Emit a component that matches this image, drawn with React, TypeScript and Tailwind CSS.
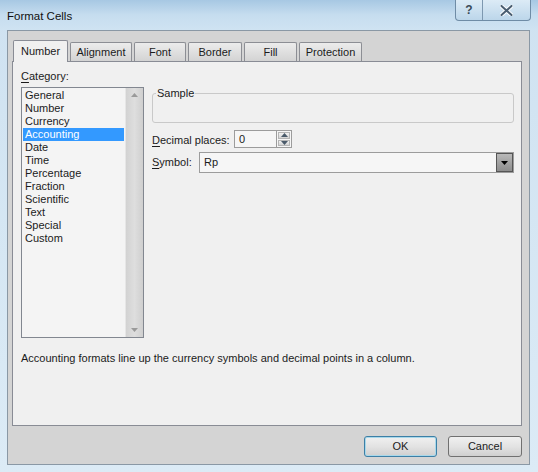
import React from 'react';

const categories = [
  'General',
  'Number',
  'Currency',
  'Accounting',
  'Date',
  'Time',
  'Percentage',
  'Fraction',
  'Scientific',
  'Text',
  'Special',
  'Custom',
];

const tabs = [
  { label: 'Number', w: 'w-[55px]' },
  { label: 'Alignment', w: 'w-[62px]' },
  { label: 'Font', w: 'w-[52px]' },
  { label: 'Border', w: 'w-[54px]' },
  { label: 'Fill', w: 'w-[53px]' },
  { label: 'Protection', w: 'w-[63px]' },
];

function Tri({ down = false, className = '' }: { down?: boolean; className?: string }) {
  return (
    <svg width="7" height="4" viewBox="0 0 7 4" className={className}>
      {down ? <path d="M0 0h7L3.5 4z" fill="currentColor" /> : <path d="M0 4h7L3.5 0z" fill="currentColor" />}
    </svg>
  );
}

export default function App() {
  return (
    <div
      className="w-[538px] h-[472px] flex flex-col overflow-hidden bg-gradient-to-b from-[#cfe2f1] to-[#dcebf6] text-[#1b1b1b] text-[11px] leading-[13px]"
      style={{ fontFamily: '"Liberation Sans", Arial, sans-serif' }}
    >
      {/* Title bar */}
      <div className="h-[30px] shrink-0 flex items-start bg-gradient-to-b from-[#a7c8e3] via-[#c6ddef] to-[#cfe3f2]">
        <div className="pl-[7px] pt-[10px] text-[11.5px] leading-[13px] text-[#101010]">Format Cells</div>
        <div className="ml-auto mr-[7px] flex h-[21px] border border-t-0 border-[#6f8ca6] rounded-b-[4px] overflow-hidden bg-gradient-to-b from-[#dcebf6] to-[#bcd6ea]">
          <div className="w-[27px] flex items-center justify-center border-r border-[#7d98b0] text-[12px] font-bold text-[#3a4a58]">?</div>
          <div className="w-[47px] flex items-center justify-center text-[#3a4a58]">
            <svg width="13" height="11" viewBox="0 0 13 11">
              <path d="M1.5 1l10 9M11.5 1l-10 9" stroke="#fafcfe" strokeWidth="4" strokeLinecap="round" />
              <path d="M1.5 1l10 9M11.5 1l-10 9" stroke="#4b5f72" strokeWidth="2" strokeLinecap="round" />
            </svg>
          </div>
        </div>
      </div>

      {/* Dialog body */}
      <div className="ml-[7px] w-[523px] h-[435px] shrink-0 flex flex-col bg-[#d4d4d4] border border-[#8a98a5] pt-[9px]">
        {/* Tabs */}
        <div className="flex items-end h-[21px] ml-[5px] gap-[2px] relative z-10">
          {tabs.map((t, i) =>
            i === 0 ? (
              <div
                key={t.label}
                className={`${t.w} h-[22px] -mb-px flex items-center justify-center bg-[#f0f0f0] border border-b-0 border-[#898c95] rounded-t-[2px]`}
              >
                {t.label}
              </div>
            ) : (
              <div
                key={t.label}
                className={`${t.w} h-[19px] flex items-center justify-center bg-gradient-to-b from-[#ececec] to-[#d3d3d3] border border-b-0 border-[#8c8e94] rounded-t-[2px]`}
              >
                {t.label}
              </div>
            ),
          )}
        </div>

        {/* Panel */}
        <div className="ml-[4px] w-[510px] h-[365px] shrink-0 bg-[#f0f0f0] border border-[#898c95] pt-[8px] pl-[8px]">
          <div className="flex">
            <div className="flex flex-col">
              <div className="h-[13px]">
                <span className="underline underline-offset-2">C</span>ategory:
              </div>
              <div className="mt-[4px] w-[123px] h-[251px] flex border border-[#828790] bg-[#f4f4f4]">
                <div className="flex-1 px-[1px] pt-[1px]">
                  {categories.map((c) => (
                    <div
                      key={c}
                      className={`h-[13px] pl-[2px] ${c === 'Accounting' ? 'bg-[#3399ff] text-white' : ''}`}
                    >
                      {c}
                    </div>
                  ))}
                </div>
                <div className="w-[18px] flex flex-col items-center justify-between bg-gradient-to-r from-[#d2d2d2] via-[#dedede] to-[#cfcfcf] border-l border-[#e6e6e6] py-[5px] text-[#9a9a9a]">
                  <Tri />
                  <Tri down />
                </div>
              </div>
            </div>

            <div className="ml-[8px] mt-[17px] w-[362px] flex flex-col">
              <fieldset className="h-[36px] border border-[#c9c9c9] rounded-[3px]">
                <legend className="ml-[3px] px-[1px] leading-[13px]">Sample</legend>
              </fieldset>

              <div className="mt-[7px] h-[18px] flex items-center">
                <div className="w-[82px] pt-[2px]">
                  <span className="underline underline-offset-2">D</span>ecimal places:
                </div>
                <div className="w-[43px] h-full flex items-center pl-[4px] bg-[#f6f6f6] border border-[#9c9c9c]">0</div>
                <div className="w-[15px] h-full flex flex-col border border-l-0 border-[#9c9c9c] bg-[#f6f6f6] p-[1px] gap-[1px]">
                  <div className="flex-1 flex items-center justify-center bg-gradient-to-b from-[#f2f2f2] to-[#d4d4d4] border border-[#b5b5b5] text-[#4a5a6a]">
                    <Tri />
                  </div>
                  <div className="flex-1 flex items-center justify-center bg-gradient-to-b from-[#f2f2f2] to-[#d4d4d4] border border-[#b5b5b5] text-[#4a5a6a]">
                    <Tri down />
                  </div>
                </div>
              </div>

              <div className="mt-[4px] h-[21px] flex items-center">
                <div className="w-[47px]">
                  <span className="underline underline-offset-2">S</span>ymbol:
                </div>
                <div className="flex-1 h-full flex items-center bg-[#f6f6f6] border border-[#9c9c9c]">
                  <div className="flex-1 pl-[4px]">Rp</div>
                  <div className="w-[17px] h-[19px] flex items-center justify-center bg-gradient-to-b from-[#b9b9b9] to-[#8d8d8d] border border-[#555] text-black">
                    <Tri down />
                  </div>
                </div>
              </div>
            </div>
          </div>

          <div className="mt-[14px]">
            Accounting formats line up the currency symbols and decimal points in a column.
          </div>
        </div>

        {/* Buttons */}
        <div className="mt-[10px] flex justify-end gap-[11px] pr-[7px]">
          <button className="w-[73px] h-[21px] rounded-[3px] border border-[#3c7fa6] bg-gradient-to-b from-[#f0f0f0] via-[#e3e3e3] to-[#cfcfcf] shadow-[inset_0_0_0_1px_#a8d8ea]">
            OK
          </button>
          <button className="w-[74px] h-[21px] rounded-[3px] border border-[#707070] bg-gradient-to-b from-[#f0f0f0] via-[#e3e3e3] to-[#cfcfcf]">
            Cancel
          </button>
        </div>
      </div>
    </div>
  );
}
